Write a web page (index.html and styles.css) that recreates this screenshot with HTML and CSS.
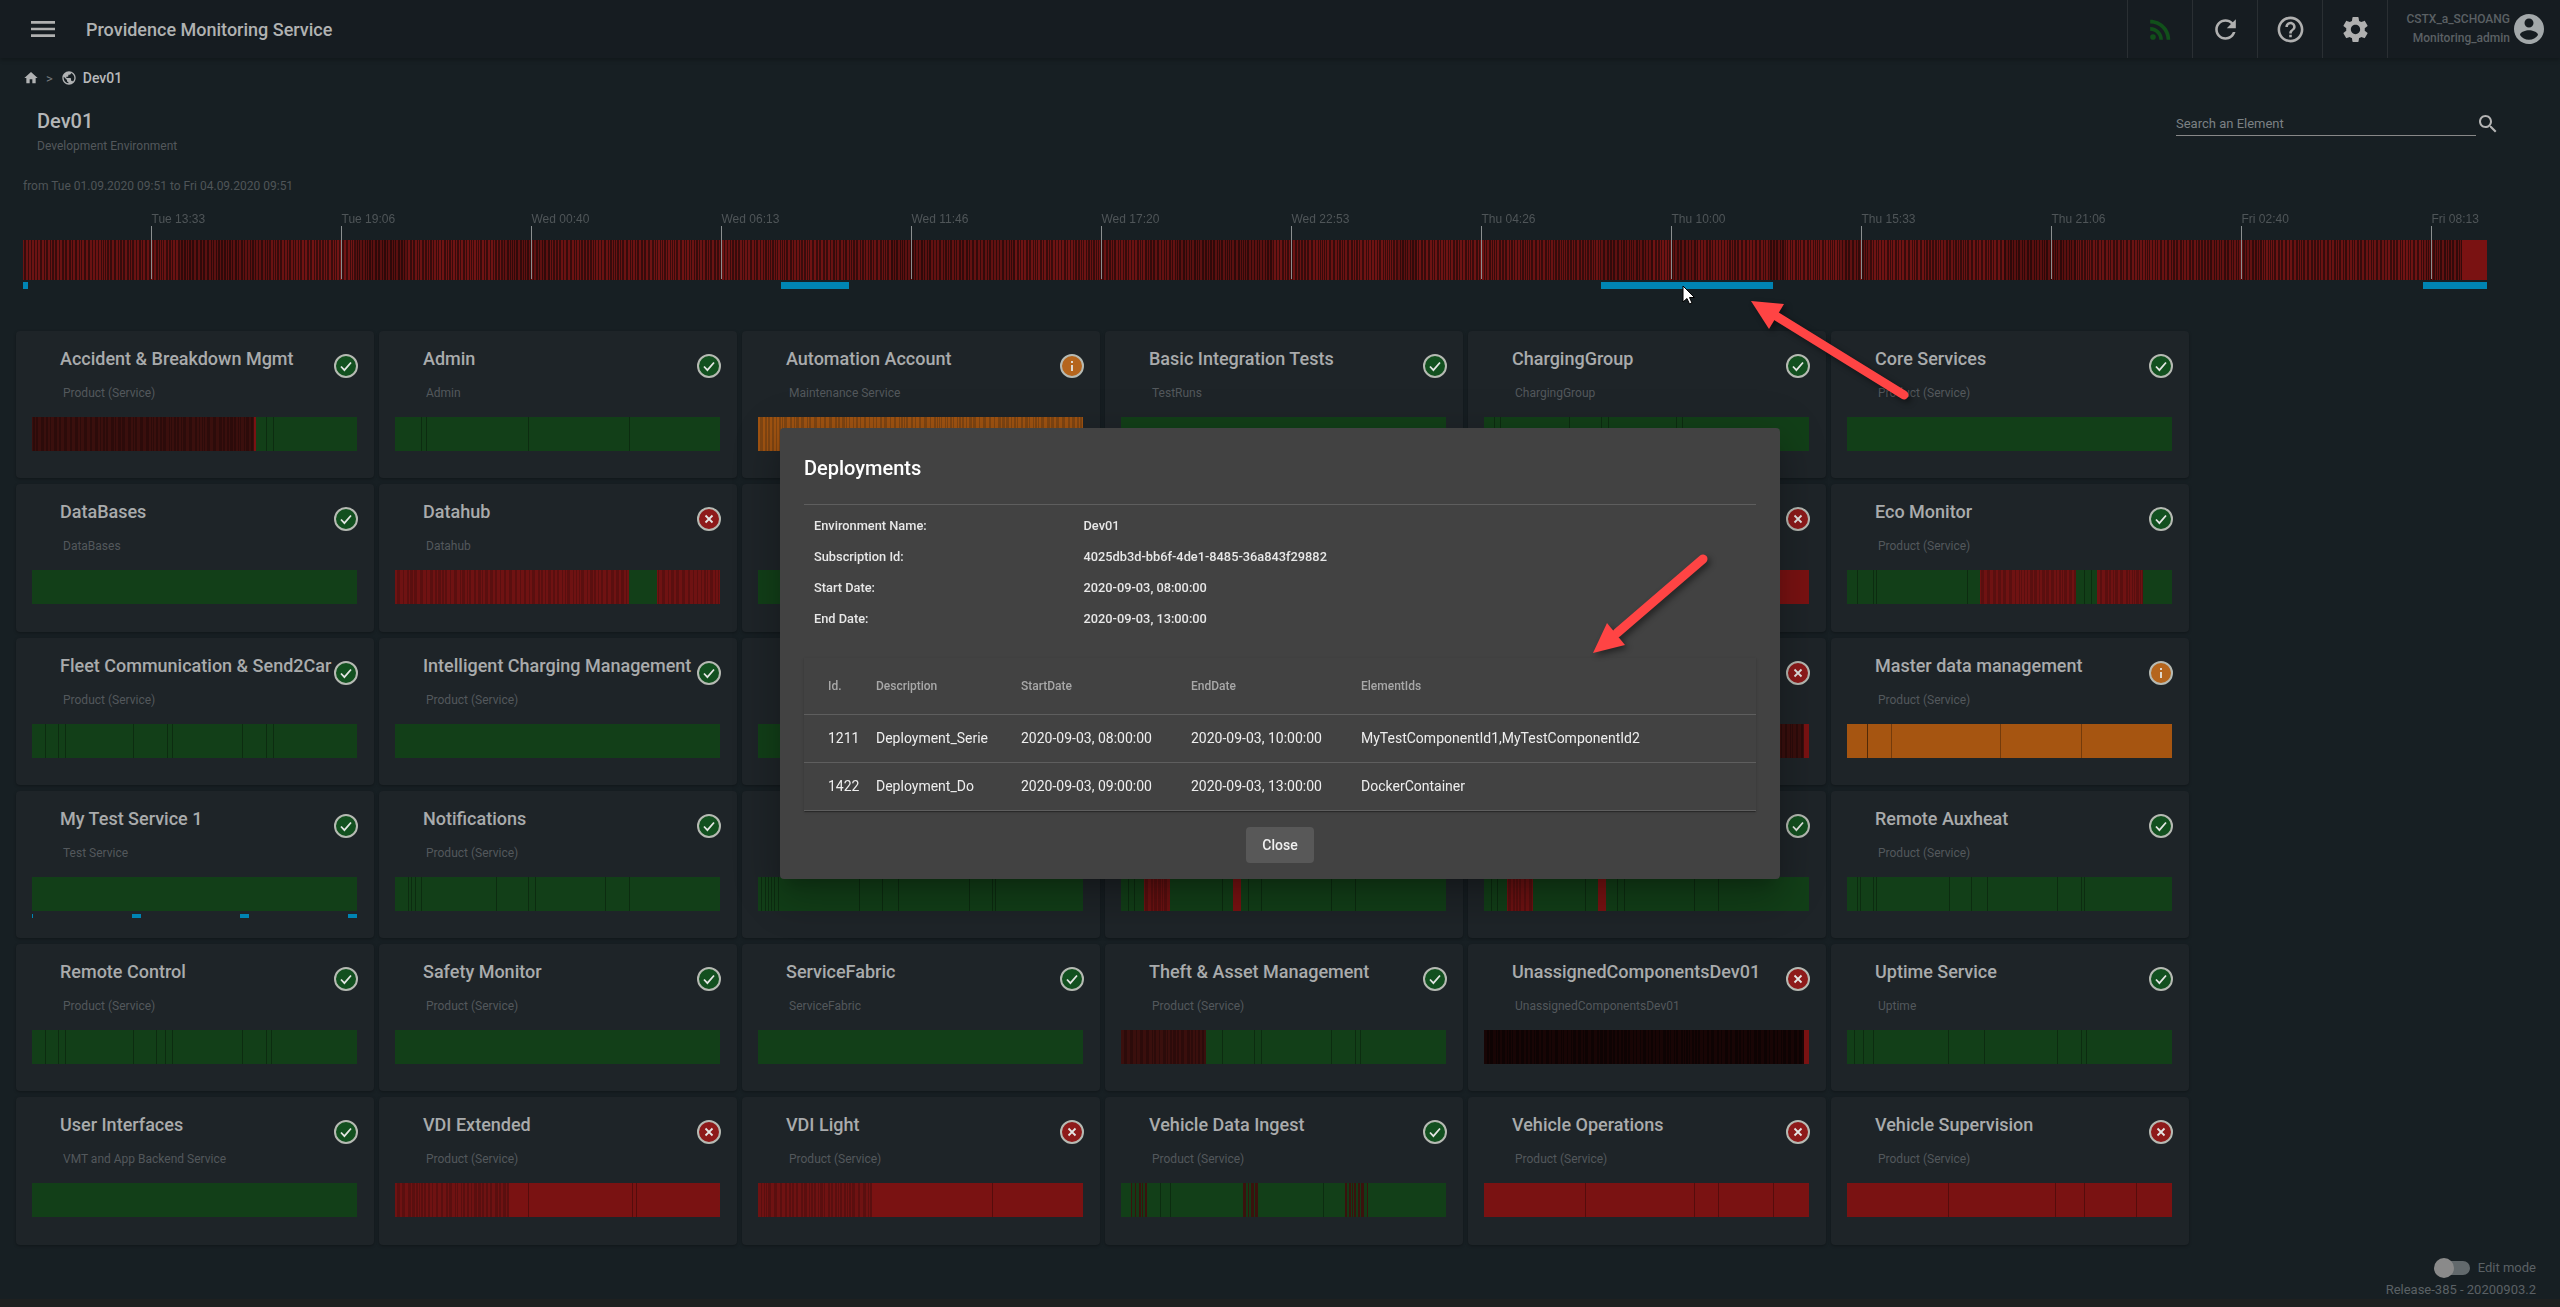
FILE: index.html
```html
<!DOCTYPE html>
<html lang="en">
<head>
    <meta charset="UTF-8">
    <title>Providence Monitoring Service</title>
    <link rel="stylesheet" href="styles.css">
</head>
<body>
    <header class="topbar">
        <svg class="menu-icon" viewBox="0 0 24 24"><path d="M3 18h18v-2H3v2zm0-5h18v-2H3v2zm0-7v2h18V6H3z"/></svg>
        <span class="app-title">Providence Monitoring Service</span>
        <div class="topbar-actions">
            <div class="action">
                <svg class="action-icon rss" viewBox="0 0 24 24"><circle cx="6.18" cy="17.82" r="2.18"/><path d="M4 4.44v2.83c7.03 0 12.73 5.7 12.73 12.73h2.83c0-8.59-6.97-15.56-15.56-15.56zm0 5.66v2.83c3.9 0 7.07 3.17 7.07 7.07h2.83c0-5.47-4.43-9.9-9.9-9.9z"/></svg>
            </div>
            <div class="action">
                <svg class="action-icon" viewBox="0 0 24 24"><path d="M17.65 6.35C16.2 4.9 14.21 4 12 4c-4.42 0-7.99 3.58-7.99 8s3.57 8 7.99 8c3.73 0 6.84-2.55 7.73-6h-2.08c-.82 2.33-3.04 4-5.65 4-3.31 0-6-2.69-6-6s2.69-6 6-6c1.66 0 3.14.69 4.22 1.78L13 11h7V4l-2.35 2.35z"/></svg>
            </div>
            <div class="action">
                <svg class="action-icon" viewBox="0 0 24 24"><path d="M11 18h2v-2h-2v2zm1-16C6.48 2 2 6.48 2 12s4.48 10 10 10 10-4.48 10-10S17.52 2 12 2zm0 18c-4.41 0-8-3.59-8-8s3.59-8 8-8 8 3.59 8 8-3.59 8-8 8zm0-14c-2.21 0-4 1.79-4 4h2c0-1.1.9-2 2-2s2 .9 2 2c0 2-3 1.75-3 5h2c0-2.25 3-2.5 3-5 0-2.21-1.79-4-4-4z"/></svg>
            </div>
            <div class="action">
                <svg class="action-icon" viewBox="0 0 24 24"><path d="M19.14 12.94c.04-.3.06-.61.06-.94 0-.32-.02-.64-.07-.94l2.03-1.58c.18-.14.23-.41.12-.61l-1.92-3.32c-.12-.22-.37-.29-.59-.22l-2.39.96c-.5-.38-1.03-.7-1.62-.94l-.36-2.54c-.04-.24-.24-.41-.48-.41h-3.84c-.24 0-.43.17-.47.41l-.36 2.54c-.59.24-1.13.57-1.62.94l-2.39-.96c-.22-.08-.47 0-.59.22L2.74 8.87c-.12.21-.08.47.12.61l2.03 1.58c-.05.3-.09.63-.09.94s.02.64.07.94l-2.03 1.58c-.18.14-.23.41-.12.61l1.92 3.32c.12.22.37.29.59.22l2.39-.96c.5.38 1.03.7 1.62.94l.36 2.54c.05.24.24.41.48.41h3.84c.24 0 .44-.17.47-.41l.36-2.54c.59-.24 1.13-.56 1.62-.94l2.39.96c.22.08.47 0 .59-.22l1.92-3.32c.12-.22.07-.47-.12-.61l-2.01-1.58zM12 15.6c-1.98 0-3.6-1.62-3.6-3.6s1.62-3.6 3.6-3.6 3.6 1.62 3.6 3.6-1.62 3.6-3.6 3.6z"/></svg>
            </div>
            <div class="user">
                <div class="user-text">
                    <div>CSTX_a_SCHOANG</div>
                    <div>Monitoring_admin</div>
                </div>
                <svg class="user-icon" viewBox="0 0 24 24"><path d="M12 2C6.48 2 2 6.48 2 12s4.48 10 10 10 10-4.48 10-10S17.52 2 12 2zm0 3c1.66 0 3 1.34 3 3s-1.34 3-3 3-3-1.34-3-3 1.34-3 3-3zm0 14.2c-2.5 0-4.71-1.28-6-3.22.03-1.99 4-3.08 6-3.08 1.99 0 5.97 1.09 6 3.08-1.29 1.94-3.5 3.22-6 3.22z"/></svg>
            </div>
        </div>
    </header>

    <nav class="crumbs">
        <svg class="crumb-icon" viewBox="0 0 24 24"><path d="M10 20v-6h4v6h5v-8h3L12 3 2 12h3v8z"/></svg>
        <span class="crumb-sep">&gt;</span>
        <svg class="crumb-icon" viewBox="0 0 24 24"><path d="M12 2C6.48 2 2 6.48 2 12s4.48 10 10 10 10-4.48 10-10S17.52 2 12 2zm-1 17.93c-3.95-.49-7-3.85-7-7.93 0-.62.08-1.21.21-1.79L9 15v1c0 1.1.9 2 2 2v1.93zm6.9-2.54c-.26-.81-1-1.39-1.9-1.39h-1v-3c0-.55-.45-1-1-1H8v-2h2c.55 0 1-.45 1-1V7h2c1.1 0 2-.9 2-2v-.41c2.93 1.19 5 4.06 5 7.41 0 2.08-.8 3.97-2.1 5.39z"/></svg>
        <span class="crumb-text">Dev01</span>
    </nav>

    <section class="env-row">
        <div>
            <div class="env-name">Dev01</div>
            <div class="env-type">Development Environment</div>
        </div>
        <div class="search">
            <input class="search-input" type="text" placeholder="Search an Element">
            <svg class="search-icon" viewBox="0 0 24 24"><path d="M15.5 14h-.79l-.28-.27C15.41 12.59 16 11.11 16 9.5 16 5.91 13.09 3 9.5 3S3 5.91 3 9.5 5.91 16 9.5 16c1.61 0 3.09-.59 4.23-1.57l.27.28v.79l5 4.99L20.49 19l-4.99-5zm-6 0C7.01 14 5 11.99 5 9.5S7.01 5 9.5 5 14 7.01 14 9.5 11.99 14 9.5 14z"/></svg>
        </div>
    </section>

    <div class="range">from Tue 01.09.2020 09:51 to Fri 04.09.2020 09:51</div>

    <section class="timeline">
        <canvas id="timeline-bar" class="timeline-bar" width="2464" height="40"></canvas>
        <svg id="timeline-ticks" class="timeline-ticks" width="2464" height="70"></svg>
        <div id="timeline-deploys" class="deploys timeline-deploys"></div>
    </section>

    <!-- cards are filled by app.js -->
    <section id="grid" class="grid"></section>

    <footer class="footer">
        <div class="edit-mode">
            <span class="toggle"><span class="toggle-thumb"></span></span>
            <span>Edit mode</span>
        </div>
        <div class="release">Release-385 - 20200903.2</div>
    </footer>
    <div class="bottom-strip"></div>

    <!-- Deployments dialog -->
    <div class="dialog-wrap">
        <div class="dialog">
            <h2 class="dialog-title">Deployments</h2>
            <div class="info">
                <div>Environment Name:</div><div>Dev01</div>
                <div>Subscription Id:</div><div>4025db3d-bb6f-4de1-8485-36a843f29882</div>
                <div>Start Date:</div><div>2020-09-03, 08:00:00</div>
                <div>End Date:</div><div>2020-09-03, 13:00:00</div>
            </div>
            <table class="deploy-table">
                <thead>
                    <tr>
                        <th class="col-id">Id.</th>
                        <th class="col-desc">Description</th>
                        <th class="col-date">StartDate</th>
                        <th class="col-date">EndDate</th>
                        <th>ElementIds</th>
                    </tr>
                </thead>
                <tbody>
                    <tr>
                        <td class="col-id">1211</td>
                        <td>Deployment_Serie</td>
                        <td>2020-09-03, 08:00:00</td>
                        <td>2020-09-03, 10:00:00</td>
                        <td>MyTestComponentId1,MyTestComponentId2</td>
                    </tr>
                    <tr>
                        <td class="col-id">1422</td>
                        <td>Deployment_Do</td>
                        <td>2020-09-03, 09:00:00</td>
                        <td>2020-09-03, 13:00:00</td>
                        <td>DockerContainer</td>
                    </tr>
                </tbody>
            </table>
            <div class="dialog-actions">
                <button class="close-btn">Close</button>
            </div>
        </div>
    </div>

    <!-- annotations drawn on top of the screenshot -->
    <svg class="marks" width="2560" height="1307">
        <g class="arrow">
            <line x1="1776" y1="316" x2="1904" y2="395"/>
            <polygon points="1751,301 1784,304 1769,329"/>
        </g>
        <g class="arrow">
            <line x1="1617" y1="633" x2="1703" y2="559"/>
            <polygon points="1593,653 1607,623 1625,645"/>
        </g>
        <path class="cursor" d="M1683 286v16l4-3.5 2.5 5.5 2.5-1-2.5-5.5h5z"/>
    </svg>

    <script src="app.js"></script>
</body>
</html>
```
FILE: styles.css
```css
* { box-sizing: border-box; }
html, body { height: 100%; }
body {
    margin: 0;
    height: 1307px;
    overflow: hidden;
    display: flex;
    flex-direction: column;
    position: relative;
    background: #171f23;
    font-family: Roboto, "Liberation Sans", sans-serif;
    color: #b0b2b3;
}

/* top bar */
.topbar {
    flex: none;
    height: 58px;
    display: flex;
    align-items: center;
    padding-left: 27px;
    background: #161c21;
    box-shadow: 0 2px 4px rgba(0, 0, 0, .25);
}
.menu-icon { width: 32px; height: 32px; fill: #b0b0b0; }
.app-title {
    margin-left: 27px;
    font-size: 18px;
    font-weight: 500;
    color: #b0b2b2;
}
.topbar-actions { margin-left: auto; display: flex; height: 100%; }
.action {
    width: 65px;
    display: flex;
    align-items: center;
    justify-content: center;
    border-left: 1px solid #2a2f33;
}
.action-icon { width: 31px; height: 31px; fill: #b0b0b0; }
.action-icon.rss { fill: #11501a; }
.user {
    width: 173px;
    display: flex;
    align-items: center;
    padding-right: 13px;
    justify-content: flex-end;
    border-left: 1px solid #2a2f33;
}
.user-text {
    text-align: right;
    font-size: 12px;
    font-weight: 500;
    line-height: 19px;
    color: #5b6064;
    margin-right: 1px;
}
.user-icon { width: 36px; height: 36px; fill: #a3a8aa; }

/* breadcrumb and heading */
.crumbs {
    flex: none;
    height: 40px;
    display: flex;
    align-items: center;
    padding-left: 23px;
}
.crumb-icon { width: 16px; height: 16px; fill: #b0b2b3; }
.crumb-sep { margin: 0 8px 0 7px; font-size: 13px; color: #767b7e; }
.crumb-text { margin-left: 6px; font-size: 14px; font-weight: 500; color: #b8b9ba; }

.env-row {
    flex: none;
    display: flex;
    justify-content: space-between;
    height: 56px;
    padding: 11px 60px 0 37px;
}
.env-name { font-size: 20px; font-weight: 500; line-height: 24px; color: #b4b6b7; }
.env-type { margin-top: 5px; font-size: 12px; line-height: 16px; color: #53585c; }
.search { display: flex; align-items: flex-start; height: 28px; margin-top: 2px; }
.search-input {
    width: 300px;
    height: 25px;
    padding: 0;
    background: none;
    border: none;
    border-bottom: 1px solid #888;
    color: #b0b2b3;
    font: 13px Roboto, sans-serif;
}
.search-input::placeholder { color: #7c8184; opacity: 1; }
.search-icon { width: 24px; height: 24px; fill: #b4b4b4; margin-top: 1px; }

.range {
    flex: none;
    margin-top: 24px;
    padding-left: 23px;
    font-size: 12px;
    line-height: 16px;
    color: #4f5558;
}

/* timeline */
.timeline {
    flex: none;
    position: relative;
    margin: 16px 0 0 23px;
    width: 2464px;
    height: 121px;
}
.timeline-bar { position: absolute; left: 0; top: 30px; display: block; }
.timeline-ticks { position: absolute; left: 0; top: 0; }
.timeline-ticks text { font: 12px "Liberation Sans", sans-serif; fill: #4f5558; }
.timeline-ticks line { stroke: #8b8f90; stroke-width: 1; }
.timeline-deploys { position: absolute; left: 0; right: 0; top: 72px; height: 7px; }

.deploys { position: relative; }
.deploy-mark { position: absolute; top: 0; bottom: 0; background: #0084b3; }

/* cards */
.grid {
    flex: none;
    display: grid;
    grid-template-columns: repeat(6, 357.5px);
    grid-auto-rows: 147.3px;
    column-gap: 5.5px;
    row-gap: 6px;
    margin-left: 16px;
}
.card {
    background: #1e2428;
    border-radius: 4px;
    box-shadow: 0 1px 3px rgba(0, 0, 0, .3);
}
.card-head {
    display: flex;
    justify-content: space-between;
    height: 24px;
    margin-top: 16px;
    padding: 0 16px 0 44px;
    white-space: nowrap;
}
.card-title { font-size: 18px; font-weight: 500; line-height: 24px; color: #a9abac; }
.card-sub {
    margin: 14px 0 16px 47px;
    height: 16px;
    font-size: 12px;
    line-height: 16px;
    color: #53585c;
}
.status { flex: none; width: 24px; height: 24px; margin-top: 7px; overflow: visible; }
.status circle { stroke: #b6bab3; stroke-width: 2; }
.status.ok circle { fill: #12501f; }
.status.bad circle { fill: #8e1a1a; }
.status.warn circle { fill: #b5651d; }
.status path { fill: none; stroke: #e4e6e4; stroke-width: 1.8; }
.card-bar { display: block; margin-left: 16px; }
.card-deploys { margin: 3px 0 0 16px; width: 325px; height: 4px; }

/* footer */
.footer {
    flex: none;
    margin-top: auto;
    padding-right: 24px;
    font-size: 13px;
    text-align: right;
    color: #5b6165;
}
.edit-mode { display: flex; justify-content: flex-end; align-items: center; gap: 8px; line-height: 20px; }
.toggle { position: relative; width: 27px; height: 14px; border-radius: 7px; background: #62696c; }
.toggle-thumb {
    position: absolute;
    left: -9px;
    top: -3px;
    width: 20px;
    height: 20px;
    border-radius: 50%;
    background: #8a8a8a;
}
.release { margin-top: 2px; line-height: 19px; }
.bottom-strip { flex: none; height: 8px; background: #1e2020; }

/* dialog */
.dialog-wrap {
    position: absolute;
    inset: 0;
    display: flex;
    align-items: center;
    justify-content: center;
}
.dialog {
    width: 1000px;
    padding: 24px 24px 16px;
    background: #424242;
    border-radius: 4px;
    color: #eee;
    box-shadow: 0 11px 15px -7px rgba(0, 0, 0, .2), 0 24px 38px 3px rgba(0, 0, 0, .14), 0 9px 46px 8px rgba(0, 0, 0, .12);
}
.dialog-title {
    margin: 0;
    padding-bottom: 20px;
    border-bottom: 1px solid #5e5e5e;
    font-size: 20px;
    font-weight: 500;
    line-height: 32px;
    color: #fff;
}
.info {
    display: grid;
    grid-template-columns: 269.5px 1fr;
    grid-auto-rows: 31px;
    align-items: center;
    padding: 5px 0 0 10px;
    font-size: 12.8px;
    font-weight: 500;
    color: #e8e8e8;
}
.deploy-table {
    width: 100%;
    margin-top: 24px;
    border-collapse: collapse;
    table-layout: fixed;
    background: #424242;
    box-shadow: 0 2px 1px -1px rgba(0, 0, 0, .2), 0 1px 1px 0 rgba(0, 0, 0, .14), 0 1px 3px 0 rgba(0, 0, 0, .12);
}
.deploy-table th {
    height: 56px;
    padding: 0;
    text-align: left;
    font-size: 12px;
    font-weight: 500;
    color: #a8a8a8;
    border-bottom: 1px solid #5e5e5e;
}
.deploy-table td {
    height: 48px;
    padding: 0;
    font-size: 14px;
    color: #eee;
    border-bottom: 1px solid #5e5e5e;
}
.deploy-table .col-id { width: 72px; padding-left: 24px; }
.deploy-table .col-desc { width: 145px; }
.deploy-table .col-date { width: 170px; }
.dialog-actions { display: flex; justify-content: center; margin-top: 16px; }
.close-btn {
    width: 68px;
    height: 36px;
    background: #585858;
    border: none;
    border-radius: 4px;
    color: #f0f0f0;
    font: 500 14px Roboto, sans-serif;
}

/* red arrows and mouse pointer */
.marks { position: absolute; left: 0; top: 0; pointer-events: none; }
.arrow { filter: drop-shadow(3px 3px 3px rgba(0, 0, 0, .45)); }
.arrow line { stroke: #ff4444; stroke-width: 9; stroke-linecap: round; }
.arrow polygon { fill: #ff4444; }
.cursor { fill: #fff; stroke: #000; stroke-width: 1; }
```
FILE: app.js
```js
// small seeded random so the strips look the same on every load
let seed = 73;
function rnd() {
    seed = (seed * 16807) % 2147483647;
    return seed / 2147483647;
}

const SOLID = { g: '#123f18', r: '#7a1212', o: '#a65511' };
const STRIPES = {
    s: ['#6f1212', '#5a0f0f'],
    d: ['#3a0f0d', '#2c0b0a'],
    k: ['#180505', '#0e0303'],
    m: ['#a05311', '#7f4512'],
    n: ['#3a120d', '#143a17']
};

// segment helpers: type, from, to (0..1) and thin dark lines
function bar(segs, lines) {
    return { segs: segs, lines: lines || [] };
}
const green = (lines) => bar([['g', 0, 1]], lines);
const red = (lines) => bar([['r', 0, 1]], lines);

const ICONS = {
    ok: '<path d="M7 12.5l3.4 3.6L17 8.5"/>',
    bad: '<path d="M8.5 8.5l7 7M15.5 8.5l-7 7"/>',
    warn: '<path d="M12 11v6M12 7v2"/>'
};

const PS = 'Product (Service)';
const cards = [
    ['Accident & Breakdown Mgmt', PS, 'ok', bar([['d', 0, .683], ['r', .683, .69], ['g', .69, 1]], [.72, .74])],
    ['Admin', 'Admin', 'ok', green([.08, .095, .41, .72])],
    ['Automation Account', 'Maintenance Service', 'warn', bar([['m', 0, 1]])],
    ['Basic Integration Tests', 'TestRuns', 'ok', green()],
    ['ChargingGroup', 'ChargingGroup', 'ok', green([.03, .05, .26, .36, .38, .59, .61])],
    ['Core Services', PS, 'ok', green()],

    ['DataBases', 'DataBases', 'ok', green()],
    ['Datahub', 'Datahub', 'bad', bar([['s', 0, .72], ['g', .72, .805], ['s', .805, 1]])],
    ['', '', 'ok', green()],
    ['', '', 'ok', green()],
    ['', '', 'bad', red()],
    ['Eco Monitor', PS, 'ok', bar([['g', 0, .41], ['s', .41, .705], ['g', .705, .77], ['s', .77, .91], ['g', .91, 1]], [.03, .08, .09, .37, .73, .75])],

    ['Fleet Communication & Send2Car', PS, 'ok', green([.04, .08, .1, .31, .415, .43, .645, .72, .74])],
    ['Intelligent Charging Management', PS, 'ok', green()],
    ['', '', 'ok', green()],
    ['', '', 'ok', green()],
    ['', '', 'bad', bar([['d', 0, .985], ['r', .985, 1]])],
    ['Master data management', PS, 'warn', bar([['o', 0, 1]], [.06, .061, .135, .47, .72])],

    ['My Test Service 1', 'Test Service', 'ok', green(), [[0, .003], [.307, .335], [.64, .668], [.973, 1]]],
    ['Notifications', PS, 'ok', green([.04, .05, .06, .08, .31, .41, .43, .645, .72])],
    ['', '', 'ok', green([.01, .02, .03, .04, .05, .06, .31, .38, .43, .65, .72, .73])],
    ['', '', 'ok', bar([['g', 0, .07], ['s', .07, .15], ['g', .15, .345], ['r', .345, .37], ['g', .37, 1]], [.02, .04, .31, .39, .43, .645, .72])],
    ['', '', 'ok', bar([['g', 0, .07], ['s', .07, .15], ['g', .15, .35], ['r', .35, .375], ['g', .375, 1]], [.02, .04, .31, .41, .43, .645, .72])],
    ['Remote Auxheat', PS, 'ok', green([.03, .04, .08, .09, .315, .38, .43, .645, .72, .73])],

    ['Remote Control', PS, 'ok', green([.04, .08, .1, .31, .38, .41, .43, .645, .72, .735])],
    ['Safety Monitor', PS, 'ok', green()],
    ['ServiceFabric', 'ServiceFabric', 'ok', green()],
    ['Theft & Asset Management', PS, 'ok', bar([['d', 0, .26], ['g', .26, 1]], [.31, .41, .43, .645, .72, .735])],
    ['UnassignedComponentsDev01', 'UnassignedComponentsDev01', 'bad', bar([['k', 0, .985], ['r', .985, 1]])],
    ['Uptime Service', 'Uptime', 'ok', green([.02, .05, .08, .31, .42, .645, .72, .735])],

    ['User Interfaces', 'VMT and App Backend Service', 'ok', green()],
    ['VDI Extended', PS, 'bad', bar([['s', 0, .35], ['r', .35, 1]], [.41, .73, .74])],
    ['VDI Light', PS, 'bad', bar([['s', 0, .35], ['r', .35, 1]], [.72])],
    ['Vehicle Data Ingest', PS, 'ok', bar([['g', 0, .03], ['n', .03, .08], ['g', .08, .375], ['n', .375, .42], ['g', .42, .69], ['n', .69, .76], ['g', .76, 1]], [.12, .15, .62])],
    ['Vehicle Operations', PS, 'bad', red([.31, .645, .72, .89])],
    ['Vehicle Supervision', PS, 'bad', red([.31, .64, .73, .89])]
];

function paintBar(canvas, spec) {
    const ctx = canvas.getContext('2d');
    const w = canvas.width, h = canvas.height;
    spec.segs.forEach(function (seg) {
        const from = Math.round(seg[1] * w), to = Math.round(seg[2] * w);
        if (SOLID[seg[0]]) {
            ctx.fillStyle = SOLID[seg[0]];
            ctx.fillRect(from, 0, to - from, h);
            return;
        }
        const cols = STRIPES[seg[0]];
        let x = from, i = 0;
        while (x < to) {
            const run = 1 + Math.floor(rnd() * 3);
            ctx.fillStyle = cols[i++ % 2];
            ctx.fillRect(x, 0, run, h);
            x += run;
        }
    });
    ctx.fillStyle = 'rgba(0,0,0,.3)';
    spec.lines.forEach(function (pos) {
        ctx.fillRect(Math.round(pos * w), 0, 1, h);
    });
}

function addDeploys(box, ranges) {
    ranges.forEach(function (r) {
        const mark = document.createElement('div');
        mark.className = 'deploy-mark';
        mark.style.left = (r[0] * 100) + '%';
        mark.style.width = ((r[1] - r[0]) * 100) + '%';
        box.appendChild(mark);
    });
}

const grid = document.getElementById('grid');
cards.forEach(function (c) {
    const card = document.createElement('div');
    card.className = 'card';
    card.innerHTML =
        '<div class="card-head"><div class="card-title"></div>' +
        '<svg class="status ' + c[2] + '" viewBox="0 0 24 24"><circle cx="12" cy="12" r="11"/>' + ICONS[c[2]] + '</svg></div>' +
        '<div class="card-sub"></div>' +
        '<canvas class="card-bar" width="325" height="34"></canvas>';
    card.querySelector('.card-title').textContent = c[0];
    card.querySelector('.card-sub').textContent = c[1];
    paintBar(card.querySelector('canvas'), c[3]);
    if (c[4]) {
        const deploys = document.createElement('div');
        deploys.className = 'deploys card-deploys';
        addDeploys(deploys, c[4]);
        card.appendChild(deploys);
    }
    grid.appendChild(card);
});

// big timeline: fine red stripes with darker stretches, solid at the very end
function paintTimeline() {
    const canvas = document.getElementById('timeline-bar');
    const ctx = canvas.getContext('2d');
    const solidFrom = 2439;
    let x = 0, i = 0, dim = 1, nextBand = 0;
    while (x < solidFrom) {
        if (x >= nextBand) {
            dim = rnd() < .25 ? .76 + rnd() * .1 : .9 + rnd() * .08;
            nextBand = x + 12 + rnd() * 60;
        }
        const run = 1 + Math.floor(rnd() * 1.8);
        const bright = i++ % 2 === 0;
        const r = Math.round((bright ? 116 : 60) * dim);
        const gb = Math.round((bright ? 20 : 12) * dim);
        ctx.fillStyle = 'rgb(' + r + ',' + gb + ',' + gb + ')';
        ctx.fillRect(x, 0, run, 40);
        x += run;
    }
    ctx.fillStyle = SOLID.r;
    ctx.fillRect(solidFrom, 0, 2464 - solidFrom, 40);
}
paintTimeline();

const labels = ['Tue 13:33', 'Tue 19:06', 'Wed 00:40', 'Wed 06:13', 'Wed 11:46', 'Wed 17:20', 'Wed 22:53',
    'Thu 04:26', 'Thu 10:00', 'Thu 15:33', 'Thu 21:06', 'Fri 02:40', 'Fri 08:13'];
const ticks = document.getElementById('timeline-ticks');
let svg = '';
labels.forEach(function (label, n) {
    const x = Math.round(127.5 + n * 190.07) + .5;
    svg += '<line x1="' + x + '" x2="' + x + '" y1="16" y2="69"/>';
    svg += '<text x="' + x + '" y="13">' + label + '</text>';
});
ticks.innerHTML = svg;

addDeploys(document.getElementById('timeline-deploys'), [
    [0, .002], [.3076, .3353], [.6404, .7102], [.9740, 1]
]);
```
